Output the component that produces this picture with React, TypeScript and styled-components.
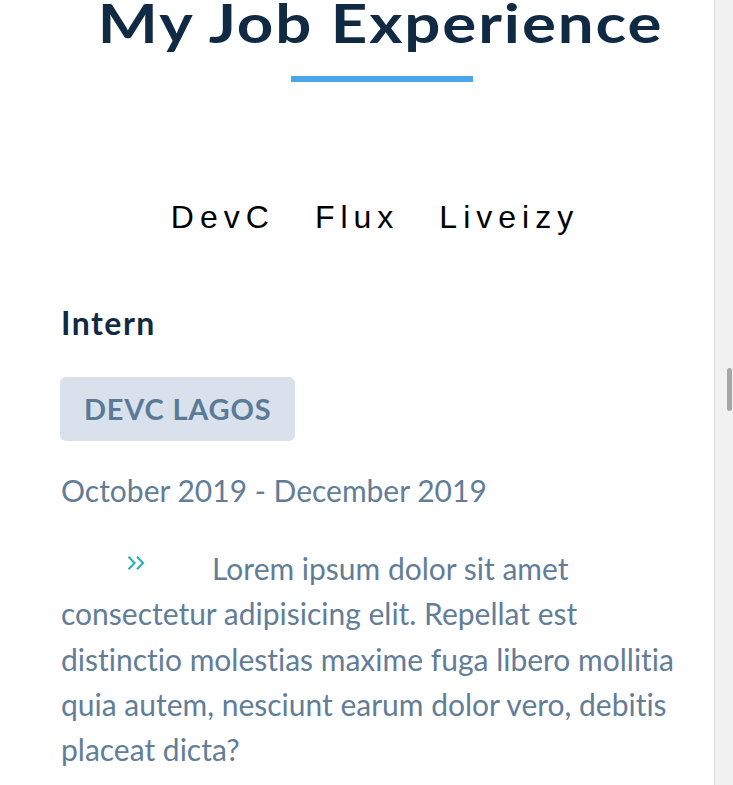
import React from "react";
import styled, { createGlobalStyle } from "styled-components";

const Global = createGlobalStyle`
  html, body { margin: 0; padding: 0; background: #ffffff; }
  body { font-family: Lato, "Open Sans", sans-serif; overflow: hidden; }
  * { box-sizing: border-box; }
`;

const Page = styled.div`
  display: flex;
  width: 733px;
  height: 785px;
  overflow: hidden;
  background: #ffffff;
`;

const Main = styled.main`
  flex: 1;
  min-width: 0;
  padding: 0 14px 0 61px;
  display: flex;
  flex-direction: column;
`;

const TitleBlock = styled.div`
  display: flex;
  flex-direction: column;
  align-items: center;
`;

const Title = styled.h2`
  margin: 0;
  font-family: Lato, sans-serif;
  font-weight: 700;
  font-size: 53px;
  line-height: 45px;
  letter-spacing: 1.6px;
  color: #102a43;
  white-space: nowrap;
  transform: scaleX(1.2);
  transform-origin: 50% 50%;
`;

const Underline = styled.div`
  width: 182px;
  height: 6px;
  margin-top: 31px;
  margin-left: 3px;
  background: #49a6e9;
`;

const Tabs = styled.div`
  display: flex;
  justify-content: center;
  gap: 40px;
  margin-top: 119px;
  padding-right: 11px;
`;

const TabButton = styled.button`
  background: transparent;
  border: none;
  padding: 0;
  margin: 0;
  font-family: "Liberation Sans", Arial, sans-serif;
  font-size: 32px;
  line-height: 1;
  letter-spacing: 6px;
  color: #000000;
  cursor: pointer;
`;

const JobInfo = styled.article`
  margin-top: 74px;
  display: flex;
  flex-direction: column;
  align-items: flex-start;
`;

const Role = styled.h3`
  margin: 0;
  font-family: Lato, sans-serif;
  font-weight: 700;
  font-size: 32px;
  line-height: 1;
  letter-spacing: 1.5px;
  color: #102a43;
`;

const Company = styled.h4`
  margin: 38px 0 0 -1px;
  padding: 17px 24px 18px;
  font-family: Lato, sans-serif;
  font-weight: 700;
  font-size: 29px;
  line-height: 1;
  letter-spacing: 0.8px;
  text-transform: uppercase;
  color: #5b7a98;
  background: #d9e2ec;
  border-radius: 6px;
`;

const DateLine = styled.p`
  margin: 34px 0 0;
  font-family: Lato, sans-serif;
  font-size: 30px;
  line-height: 1;
  color: #627d98;
`;

const Desc = styled.p`
  margin: 41px 0 0;
  font-family: Lato, sans-serif;
  font-size: 30px;
  line-height: 45.3px;
  font-variant-ligatures: none;
  color: #627d98;
`;

const Icon = styled.span`
  display: inline-block;
  width: 18px;
  height: 14px;
  margin: 0 67px 0 66px;
  vertical-align: 10px;
  color: #2caeba;
  svg { display: block; }
`;

const Scrollbar = styled.div`
  width: 19px;
  flex-shrink: 0;
  background: #f1f1f1;
  border-left: 1px solid #dcdcdc;
  padding-top: 368px;
  padding-left: 12px;
`;

const Thumb = styled.div`
  width: 5px;
  height: 43px;
  border-radius: 3px;
  background: #a6a6a6;
`;

const ChevronsRight = () => (
  <svg width="18" height="14" viewBox="0 0 18 14" fill="none" stroke="currentColor" strokeWidth="2.1">
    <path d="M1.5 0.8 L7.6 7 L1.5 13.2" />
    <path d="M10 0.8 L16.1 7 L10 13.2" />
  </svg>
);

export default function App() {
  return (
    <>
      <Global />
      <Page>
        <Main>
          <TitleBlock>
            <Title>My Job Experience</Title>
            <Underline />
          </TitleBlock>
          <Tabs>
            <TabButton>DevC</TabButton>
            <TabButton>Flux</TabButton>
            <TabButton>Liveizy</TabButton>
          </Tabs>
          <JobInfo>
            <Role>Intern</Role>
            <Company>devc lagos</Company>
            <DateLine>October 2019 - December 2019</DateLine>
          </JobInfo>
          <Desc>
            <Icon>
              <ChevronsRight />
            </Icon>
            Lorem ipsum dolor sit amet consectetur adipisicing elit. Repellat est distinctio molestias
            maxime fuga libero mollitia quia autem, nesciunt earum dolor vero, debitis placeat dicta?
          </Desc>
        </Main>
        <Scrollbar>
          <Thumb />
        </Scrollbar>
      </Page>
    </>
  );
}
